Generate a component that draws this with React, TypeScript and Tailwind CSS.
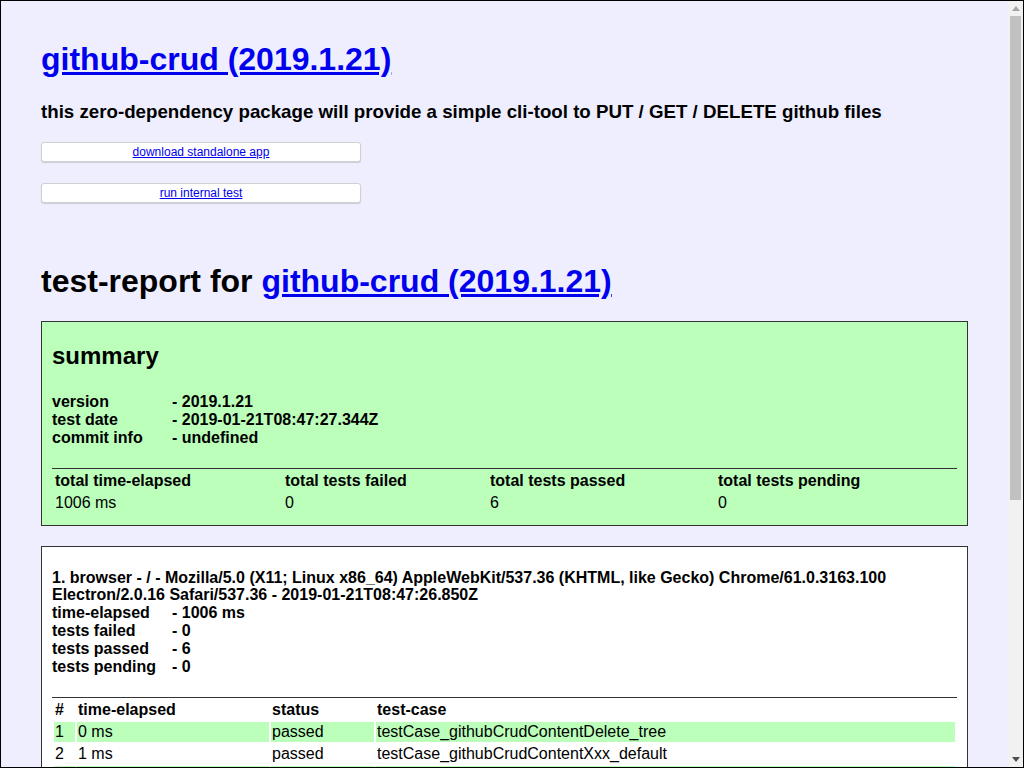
import React from "react";

const summaryInfo = [
  ["version", "- 2019.1.21"],
  ["test date", "- 2019-01-21T08:47:27.344Z"],
  ["commit info", "- undefined"],
];

const summaryTotals = [
  ["total time-elapsed", "1006 ms"],
  ["total tests failed", "0"],
  ["total tests passed", "6"],
  ["total tests pending", "0"],
];

const browserInfo = [
  ["time-elapsed", "- 1006 ms"],
  ["tests failed", "- 0"],
  ["tests passed", "- 6"],
  ["tests pending", "- 0"],
];

const testCases = [
  ["1", "0 ms", "passed", "testCase_githubCrudContentDelete_tree"],
  ["2", "1 ms", "passed", "testCase_githubCrudContentXxx_default"],
  ["3", "1 ms", "passed", "testCase_githubCrudContentPutFile_default"],
  ["4", "0 ms", "passed", "testCase_githubCrudContentTouch_default"],
];

const Link = ({ children, className = "" }: { children: React.ReactNode; className?: string }) => (
  <a href="#" className={"text-[#0000ee] underline " + className}>
    {children}
  </a>
);

const InfoRows = ({ rows }: { rows: string[][] }) => (
  <div className="font-bold">
    {rows.map(([k, v]) => (
      <div key={k} className="flex leading-[18px]">
        <span className="w-[120px]">{k}</span>
        <span>{v}</span>
      </div>
    ))}
  </div>
);

const Scrollbar = () => (
  <div className="flex w-[15px] flex-col bg-[#f1f1f1]">
    <div className="flex h-[15px] items-center justify-center">
      <svg width="8" height="5" viewBox="0 0 8 5">
        <polygon points="0,5 4,0 8,5" fill="#a3a3a3" />
      </svg>
    </div>
    <div className="mx-[2px] h-[484px] bg-[#c1c1c1]" />
    <div className="flex-1" />
    <div className="flex h-[15px] items-center justify-center">
      <svg width="8" height="5" viewBox="0 0 8 5">
        <polygon points="0,0 8,0 4,5" fill="#505050" />
      </svg>
    </div>
  </div>
);

export default function App() {
  return (
    <div className="flex h-[768px] w-[1024px] overflow-hidden border border-black font-['Liberation_Sans',Arial,sans-serif] text-[16px] text-black">
      <div className="flex-1 overflow-hidden bg-[#eeeeff] px-[40px]">
        <h1 className="mt-[40px] text-[32px] font-bold leading-[37px]">
          <Link>github-crud (2019.1.21)</Link>
        </h1>
        <h3 className="mt-[23px] text-[18.72px] font-bold leading-[22px]">
          this zero-dependency package will provide a simple cli-tool to PUT / GET / DELETE github files
        </h3>
        <div className="mt-[19px] flex h-[20px] w-[320px] items-center justify-center rounded-[3px] border border-[#d0d0d0] bg-white text-[12px] shadow-[0_1px_1px_rgba(0,0,0,0.15)]">
          <Link>download standalone app</Link>
        </div>
        <div className="mt-[21px] flex h-[20px] w-[320px] items-center justify-center rounded-[3px] border border-[#d0d0d0] bg-white text-[12px] shadow-[0_1px_1px_rgba(0,0,0,0.15)]">
          <Link>run internal test</Link>
        </div>

        <h1 className="mt-[60px] text-[32px] font-bold leading-[37px]">
          test-report for <Link>github-crud (2019.1.21)</Link>
        </h1>

        <div className="mt-[21px] border border-[#333] bg-[#bbffbb] px-[10px] pb-[10px]">
          <h2 className="pt-[20px] text-[24px] font-bold leading-[28px]">summary</h2>
          <div className="mt-[23px]">
            <InfoRows rows={summaryInfo} />
          </div>
          <div className="mt-[21px] border-t border-[#333]" />
          <div className="grid grid-cols-[228px_203px_226px_1fr] gap-[2px] p-[2px]">
            {summaryTotals.map(([k]) => (
              <div key={k} className="h-[20px] pl-[1px] font-bold leading-[20px]">
                {k}
              </div>
            ))}
            {summaryTotals.map(([k, v]) => (
              <div key={k + "v"} className="h-[20px] pl-[1px] leading-[20px]">
                {v}
              </div>
            ))}
          </div>
        </div>

        <div className="mt-[20px] border border-[#333] bg-white px-[10px] pb-[11px]">
          <div className="pt-[22px] font-bold leading-[17px]">
            1. browser - / - Mozilla/5.0 (X11; Linux x86_64) AppleWebKit/537.36 (KHTML, like Gecko) Chrome/61.0.3163.100 Electron/2.0.16 Safari/537.36 - 2019-01-21T08:47:26.850Z
          </div>
          <div className="mt-[1px]">
            <InfoRows rows={browserInfo} />
          </div>
          <div className="mt-[21px] border-t border-[#333]" />
          <div className="grid grid-cols-[21px_192px_103px_1fr] gap-[2px] p-[2px]">
            {["#", "time-elapsed", "status", "test-case"].map((h) => (
              <div key={h} className="h-[20px] pl-[1px] font-bold leading-[20px]">
                {h}
              </div>
            ))}
            {testCases.map((row, i) =>
              row.map((c, j) => (
                <div
                  key={i + "-" + j}
                  className={"h-[20px] pl-[1px] leading-[20px] " + (i % 2 === 0 ? "bg-[#bbffbb]" : "")}
                >
                  {c}
                </div>
              ))
            )}
          </div>
        </div>
      </div>
      <Scrollbar />
    </div>
  );
}
